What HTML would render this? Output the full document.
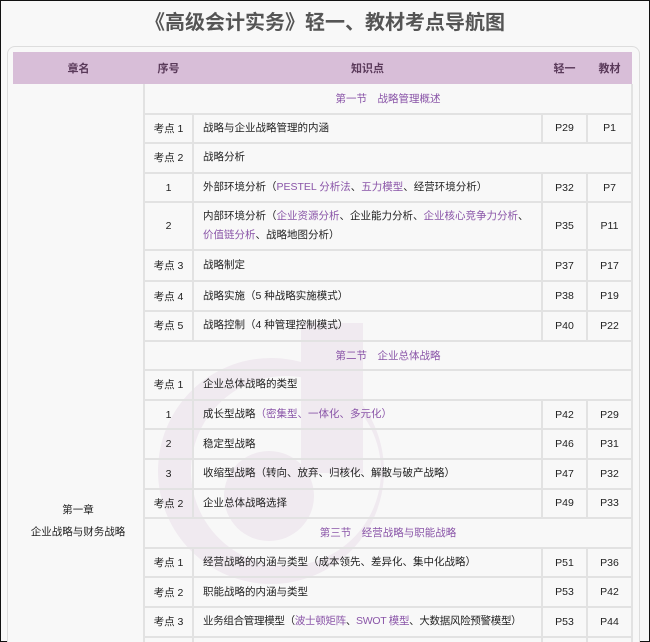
<!DOCTYPE html>
<html><head><meta charset="utf-8"><style>
*{margin:0;padding:0;box-sizing:border-box}
html,body{width:650px;height:642px;overflow:hidden;background:#f8f8f8}
body{font-family:"Liberation Sans","Noto Sans CJK SC",sans-serif;color:#222;position:relative;border:1px solid #111;}
h1{position:absolute;left:0;right:0;top:5px;text-align:center;font-size:20px;font-weight:bold;color:#555}
.card{position:absolute;left:6px;top:45px;width:633px;height:610px;border:1px solid #ddd;border-radius:8px;background:#f8f8f8}
svg.wm{position:absolute;left:0;top:0}
table{position:absolute;left:12px;top:51px;border-collapse:collapse;width:619px;font-size:10.5px;table-layout:fixed}
td,th{border:2px solid #e2e2e2;text-align:center;vertical-align:middle;padding:0;white-space:nowrap}
th{background:#d8bed8;color:#5a3a5a;font-weight:bold;height:32px;border:none;font-size:11px}
td.l{text-align:left;padding-left:9px;line-height:19px}
.p{color:#8a55a8}
.sec{color:#8a55a8}
td.ch{border:none;border-right:2px solid #e2e2e2;line-height:22px;padding-top:292px}
tr{height:29.6px}
</style></head><body>
<h1>《高级会计实务》轻一、教材考点导航图</h1>
<div class="card"></div>
<svg class="wm" width="650" height="642"><g fill="#f0eaf0">
<path fill-rule="evenodd" d="M157 470a113 113 0 1 0 226 0a113 113 0 1 0 -226 0ZM190 470a95 95 0 1 0 190 0a95 95 0 1 0 -190 0Z"/>
<rect x="300" y="322" width="62" height="150"/>
<circle cx="268" cy="495" r="45"/></g></svg>
<table>
<colgroup><col style="width:131px"><col style="width:49px"><col style="width:349px"><col style="width:45px"><col style="width:45px"></colgroup>
<tr><th>章名</th><th>序号</th><th>知识点</th><th>轻一</th><th>教材</th></tr>
<tr><td class="ch" rowspan="19">第一章<br>企业战略与财务战略</td><td colspan="4" class="sec" style="border-top:none">第一节　战略管理概述</td></tr>
<tr><td>考点 1</td><td class="l">战略与企业战略管理的内涵</td><td>P29</td><td>P1</td></tr>
<tr><td>考点 2</td><td class="l" colspan="3">战略分析</td></tr>
<tr><td>1</td><td class="l">外部环境分析（<span class="p">PESTEL 分析法</span>、<span class="p">五力模型</span>、经营环境分析）</td><td>P32</td><td>P7</td></tr>
<tr style="height:48px"><td>2</td><td class="l">内部环境分析（<span class="p">企业资源分析</span>、企业能力分析、<span class="p">企业核心竞争力分析</span>、<br><span class="p">价值链分析</span>、战略地图分析）</td><td>P35</td><td>P11</td></tr>
<tr style="height:31px"><td>考点 3</td><td class="l">战略制定</td><td>P37</td><td>P17</td></tr>
<tr><td>考点 4</td><td class="l">战略实施（5 种战略实施模式）</td><td>P38</td><td>P19</td></tr>
<tr><td>考点 5</td><td class="l">战略控制（4 种管理控制模式）</td><td>P40</td><td>P22</td></tr>
<tr><td colspan="4" class="sec">第二节　企业总体战略</td></tr>
<tr><td>考点 1</td><td class="l" colspan="3">企业总体战略的类型</td></tr>
<tr><td>1</td><td class="l">成长型战略<span class="p">（密集型、一体化、多元化）</span></td><td>P42</td><td>P29</td></tr>
<tr><td>2</td><td class="l">稳定型战略</td><td>P46</td><td>P31</td></tr>
<tr><td>3</td><td class="l">收缩型战略（转向、放弃、归核化、解散与破产战略）</td><td>P47</td><td>P32</td></tr>
<tr><td>考点 2</td><td class="l">企业总体战略选择</td><td>P49</td><td>P33</td></tr>
<tr><td colspan="4" class="sec">第三节　经营战略与职能战略</td></tr>
<tr><td>考点 1</td><td class="l">经营战略的内涵与类型（成本领先、差异化、集中化战略）</td><td>P51</td><td>P36</td></tr>
<tr><td>考点 2</td><td class="l">职能战略的内涵与类型</td><td>P53</td><td>P42</td></tr>
<tr><td>考点 3</td><td class="l" style="letter-spacing:-0.3px">业务组合管理模型（<span class="p">波士顿矩阵</span>、<span class="p">SWOT 模型</span>、大数据风险预警模型）</td><td>P53</td><td>P44</td></tr>
<tr><td></td><td></td><td></td><td></td></tr>
</table>
</body></html>
